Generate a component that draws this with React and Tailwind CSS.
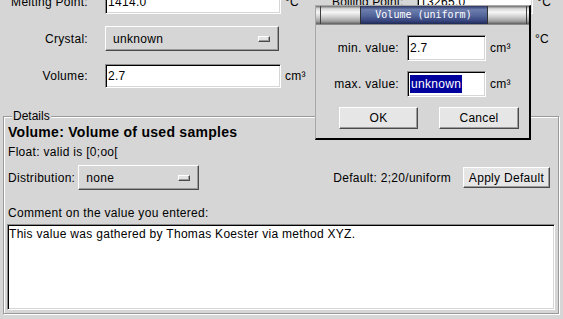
import React from "react";

const sunken =
  "bg-white border border-t-[#8c8c8c] border-l-[#8c8c8c] border-r-white border-b-white shadow-[inset_1px_1px_0_#000,inset_-1px_-1px_0_#d6d6d6]";
const raised =
  "border border-t-white border-l-white border-r-[#4a4a4a] border-b-[#4a4a4a] shadow-[inset_-1px_-1px_0_#9c9c9c]";
const metal =
  "bg-[linear-gradient(to_bottom,#6e6e6e_0%,#d8d8d8_15%,#f6f6f6_35%,#d0d0d0_60%,#a0a0a0_85%,#5e5e5e_100%)]";

function Field({ value, className = "" }) {
  return (
    <div className={`${sunken} h-full flex items-center pl-[2px] ${className}`}>
      {value}
    </div>
  );
}

function OptionMenu({ value, className = "" }) {
  return (
    <div className={`${raised} h-full flex items-center pl-[7px] pr-[8px] bg-[#d6d6d6] ${className}`}>
      <span className="flex-1">{value}</span>
      <span className={`${raised} w-[12px] h-[6px] bg-[#e4e4e4]`} />
    </div>
  );
}

function Button({ children, className = "" }) {
  return (
    <button className={`${raised} h-full bg-[#e6e6e6] flex items-center justify-center ${className}`}>
      {children}
    </button>
  );
}

export default function App() {
  return (
    <div className="relative w-[563px] h-[319px] overflow-hidden bg-[#d6d6d6] text-black text-[12px] leading-[14px] tracking-[0.3px] font-['Liberation_Sans',Arial,sans-serif]">
      {/* top property rows */}
      <div className="-mt-[10px]">
        <div className="flex items-center h-[24px]">
          <span className="w-[88px] text-right">Melting Point:</span>
          <Field value="1414.0" className="ml-[17px] w-[176px]" />
          <span className="ml-[4px]">°C</span>
          <span className="ml-[33px] w-[72px] whitespace-nowrap tracking-[0.1px]">Boiling Point:</span>
          <Field value="13265.0" className="ml-[13px] w-[116px]" />
          <span className="ml-[4px]">°C</span>
        </div>
        <div className="flex items-center h-[25px] mt-[12px]">
          <span className="w-[88px] text-right">Crystal:</span>
          <OptionMenu value="unknown" className="ml-[17px] w-[174px]" />
          <span className="ml-[256px]">°C</span>
        </div>
        <div className="flex items-center h-[24px] mt-[13px]">
          <span className="w-[88px] text-right">Volume:</span>
          <Field value="2.7" className="ml-[17px] w-[176px]" />
          <span className="ml-[4px]">cm³</span>
        </div>
      </div>

      {/* Details frame */}
      <fieldset className="mt-[21px] ml-[3px] w-[556px] h-[205px] border border-[#9a9a9a] shadow-[inset_1px_1px_0_#fff,1px_1px_0_#fff] pl-[4px]">
        <legend className="ml-[4px] px-[1px] bg-[#d6d6d6] tracking-normal">Details</legend>
        <div className="mt-[1px] text-[14px] leading-[17px] font-bold tracking-[0.27px]">
          Volume: Volume of used samples
        </div>
        <div className="mt-[4px]">Float: valid is [0;oo[</div>
        <div className="mt-[6px] flex items-center h-[25px]">
          <span>Distribution:</span>
          <OptionMenu value="none" className="ml-[3px] w-[121px]" />
          <span className="ml-auto">Default: 2;20/uniform</span>
          <Button className="ml-[12px] mr-[8px] w-[87px] !h-[21px]">Apply Default</Button>
        </div>
        <div className="mt-[16px]">Comment on the value you entered:</div>
        <div className={`${sunken} mt-[4px] -ml-[1px] w-[548px] h-[86px] pl-[1px] pt-[2px]`}>
          This value was gathered by Thomas Koester via method XYZ.
        </div>
      </fieldset>

      {/* floating dialog window */}
      <div className="absolute left-[315px] top-[5px] w-[216px] h-[135px] bg-[#d6d6d6] border-l border-t border-l-[#a8a8a8] border-t-[#a8a8a8] border-r-2 border-b-2 border-r-black border-b-black">
        <div className="flex h-[19px] border-b border-[#8a8a8a]">
          <div className={`${metal} w-[4px]`} />
          <div className="w-[1px] bg-[#404040]" />
          <div className={`${metal} flex-1`} />
          <div className="w-[1px] bg-[#303030]" />
          <div className="w-[126px] flex items-center justify-center text-white text-[10px] tracking-normal font-['DejaVu_Sans_Mono',monospace] bg-[linear-gradient(to_bottom,#2a3560_0%,#6d7eae_20%,#53649a_55%,#34427a_85%,#1e2850_100%)]">
            Volume (uniform)
          </div>
          <div className="w-[1px] bg-[#303030]" />
          <div className={`${metal} flex-1`} />
          <div className="w-[1px] bg-[#404040]" />
          <div className={`${metal} w-[2px]`} />
        </div>
        <div className="mt-[10px] flex items-center h-[26px]">
          <span className="w-[83px] text-right">min. value:</span>
          <Field value="2.7" className="ml-[8px] w-[79px]" />
          <span className="ml-[4px]">cm³</span>
        </div>
        <div className="mt-[10px] flex items-center h-[26px]">
          <span className="w-[83px] text-right">max. value:</span>
          <Field
            value={<span className="bg-[#00009c] text-white px-[1px] leading-[18px]">unknown</span>}
            className="ml-[8px] w-[79px]"
          />
          <span className="ml-[4px]">cm³</span>
        </div>
        <div className="mt-[10px] flex h-[22px]">
          <Button className="ml-[23px] w-[79px]">OK</Button>
          <Button className="ml-[21px] w-[80px]">Cancel</Button>
        </div>
      </div>
    </div>
  );
}
